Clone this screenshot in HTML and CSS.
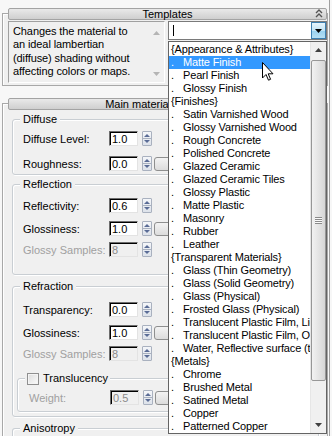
FILE: index.html
```html
<!DOCTYPE html>
<html>
<head>
<meta charset="utf-8">
<title>Material Templates</title>
<link rel="stylesheet" href="styles.css">
</head>
<body>
<div class="panel">
  <section class="rollout">
    <div class="rollout-title">
      <span>Templates</span>
      <svg class="chev" width="8" height="9" viewBox="0 0 8 9"><path d="M1 4 L4 1 L7 4 M1 8 L4 5 L7 8" fill="none" stroke="#555" stroke-width="1.4"/></svg>
    </div>
    <div class="rollout-body tpl-body">
      <div class="desc">
        <div class="desc-text">Changes the material to<br>an ideal lambertian<br>(diffuse) shading without<br>affecting colors or maps.</div>
        <div class="desc-scroll">
          <svg width="7" height="4" viewBox="0 0 7 4"><path d="M0 4 L3.5 0 L7 4 Z" fill="#b4b4b4"/></svg>
          <svg width="7" height="4" viewBox="0 0 7 4"><path d="M0 0 L3.5 4 L7 0 Z" fill="#b4b4b4"/></svg>
        </div>
      </div>
      <div class="combo">
        <div class="combo-field"><span class="caret"></span></div>
        <div class="combo-btn"><svg width="7" height="4" viewBox="0 0 7 4"><path d="M0 0 L3.5 4 L7 0 Z" fill="#000"/></svg></div>
      </div>
    </div>
  </section>

  <section class="rollout main">
    <div class="rollout-title"><span>Main material parameters</span></div>
    <div class="rollout-body main-body">
      <div class="group g-diffuse">
        <div class="group-label">Diffuse</div>
        <div class="row r1"><span class="lbl">Diffuse Level:</span><span class="num">1.0</span><span class="spin"></span></div>
        <div class="row r2"><span class="lbl">Roughness:</span><span class="num">0.0</span><span class="spin"></span><span class="mapbtn"></span></div>
      </div>
      <div class="group g-reflect">
        <div class="group-label">Reflection</div>
        <div class="row r1"><span class="lbl">Reflectivity:</span><span class="num">0.6</span><span class="spin"></span></div>
        <div class="row r2"><span class="lbl">Glossiness:</span><span class="num">1.0</span><span class="spin"></span><span class="mapbtn"></span></div>
        <div class="row r3 off"><span class="lbl">Glossy Samples:</span><span class="num">8</span><span class="spin"></span></div>
      </div>
      <div class="group g-refract">
        <div class="group-label">Refraction</div>
        <div class="row r1"><span class="lbl">Transparency:</span><span class="num">0.0</span><span class="spin"></span></div>
        <div class="row r2"><span class="lbl">Glossiness:</span><span class="num">1.0</span><span class="spin"></span><span class="mapbtn"></span></div>
        <div class="row r3 off"><span class="lbl">Glossy Samples:</span><span class="num">8</span><span class="spin"></span></div>
        <div class="subgroup">
          <div class="group-label sub-label"><span class="check"></span>Translucency</div>
          <div class="row r4 off"><span class="lbl sublbl">Weight:</span><span class="num">0.5</span><span class="spin"></span><span class="mapbtn"></span></div>
        </div>
      </div>
      <div class="group g-aniso">
        <div class="group-label">Anisotropy</div>
      </div>
    </div>
  </section>

  <div class="vline"></div>

  <div class="dropdown">
    <ul class="list">
      <li>{Appearance &amp; Attributes}</li>
      <li class="sel"><i>.</i>Matte Finish</li>
      <li><i>.</i>Pearl Finish</li>
      <li><i>.</i>Glossy Finish</li>
      <li>{Finishes}</li>
      <li><i>.</i>Satin Varnished Wood</li>
      <li><i>.</i>Glossy Varnished Wood</li>
      <li><i>.</i>Rough Concrete</li>
      <li><i>.</i>Polished Concrete</li>
      <li><i>.</i>Glazed Ceramic</li>
      <li><i>.</i>Glazed Ceramic Tiles</li>
      <li><i>.</i>Glossy Plastic</li>
      <li><i>.</i>Matte Plastic</li>
      <li><i>.</i>Masonry</li>
      <li><i>.</i>Rubber</li>
      <li><i>.</i>Leather</li>
      <li>{Transparent Materials}</li>
      <li><i>.</i>Glass (Thin Geometry)</li>
      <li><i>.</i>Glass (Solid Geometry)</li>
      <li><i>.</i>Glass (Physical)</li>
      <li><i>.</i>Frosted Glass (Physical)</li>
      <li><i>.</i>Translucent Plastic Film, Light Blur</li>
      <li><i>.</i>Translucent Plastic Film, Opalescent</li>
      <li><i>.</i>Water, Reflective surface (thin geometry)</li>
      <li>{Metals}</li>
      <li><i>.</i>Chrome</li>
      <li><i>.</i>Brushed Metal</li>
      <li><i>.</i>Satined Metal</li>
      <li><i>.</i>Copper</li>
      <li><i>.</i>Patterned Copper</li>
    </ul>
    <div class="vscroll">
      <div class="sb-arrow"><svg width="7" height="4" viewBox="0 0 7 4"><path d="M0 4 L3.5 0 L7 4 Z" fill="#404040"/></svg></div>
      <div class="sb-track"><div class="sb-thumb"><span class="grip"></span></div></div>
      <div class="sb-arrow"><svg width="7" height="4" viewBox="0 0 7 4"><path d="M0 0 L3.5 4 L7 0 Z" fill="#404040"/></svg></div>
    </div>
  </div>

  <svg class="cursor" width="12" height="19" viewBox="0 0 12 19"><path d="M0.5 0.5 L0.5 16 L4 12.5 L6.5 18.2 L8.6 17.3 L6.2 11.8 L11 11.8 Z" fill="#fff" stroke="#000" stroke-width="1" stroke-linejoin="miter"/></svg>
</div>
</body>
</html>
```
FILE: styles.css
```css
* { box-sizing: border-box; }
html, body { margin: 0; padding: 0; }
body {
  width: 332px;
  height: 436px;
  overflow: hidden;
  background: #f7f7f7;
  font-family: "Liberation Sans", Arial, sans-serif;
  font-size: 11px;
  color: #000;
}
.panel {
  position: relative;
  width: 332px;
  height: 436px;
  padding: 8px 0 0 2px;
}

/* rollouts */
.rollout { width: 326px; }
.rollout + .rollout { margin-top: 12px; }
.rollout-title {
  position: relative;
  z-index: 1;
  margin: 0 1px 0 6px;
  height: 12px;
  border: 1px solid #a3a3a3;
  border-radius: 2px;
  background: linear-gradient(#e9e9e9, #cfcfcf);
  text-align: center;
  line-height: 10px;
  font-size: 11px;
}
.chev { position: absolute; right: 3px; top: 0; }
.rollout-body {
  margin-top: -7px;
  border: 1px solid #a8a8a8;
  box-shadow: inset 1px 1px 0 #fff;
  background: #f0f0f0;
}
.tpl-body {
  display: flex;
  padding: 7px 0 2px 5px;
}

/* description box */
.desc {
  width: 157px;
  height: 62px;
  display: flex;
  border: 1px solid;
  border-color: #a0a0a0 #ffffff #ffffff #a0a0a0;
  background: #f0f0f0;
}
.desc-text {
  flex: 1;
  padding: 3px 0 0 4px;
  line-height: 13.3px;
  letter-spacing: -0.1px;
  white-space: nowrap;
}
.desc-scroll {
  width: 15px;
  display: flex;
  flex-direction: column;
  justify-content: space-between;
  align-items: center;
  padding: 9px 0 6px;
}
.desc-scroll svg { display: block; }

/* combo */
.combo {
  margin-left: 3px;
  width: 159px;
  height: 19px;
  display: flex;
  border: 1px solid #7a7a7a;
  background: #fff;
}
.combo-field { flex: 1; padding: 3px 0 0 4px; }
.caret { display: block; width: 1px; height: 11px; background: #000; }
.combo-btn {
  width: 15px;
  display: flex;
  align-items: center;
  justify-content: center;
  border: 1px solid #3c7fb1;
  background: linear-gradient(#e5f4fc, #c4e5f6 50%, #98d1ef 51%, #b6e0f4);
}

/* main rollout */
.main-body {
  height: 340px;
  padding: 15px 8px 0 9px;
}
.group {
  border: 1px solid #c9ced3;
  border-radius: 3px;
  box-shadow: inset 1px 1px 0 #fff, 1px 1px 0 #fff;
}
.group-label {
  width: fit-content;
  margin: -7px 0 0 7px;
  padding: 0 3px;
  line-height: 13px;
  background: #f0f0f0;
}
.g-diffuse { padding-bottom: 3px; }
.g-reflect { margin-top: 9px; padding-bottom: 17px; }
.g-refract { margin-top: 11px; padding-bottom: 4px; }
.g-aniso { margin-top: 11px; height: 20px; border-bottom: 0; }

.row {
  display: flex;
  align-items: center;
  height: 15px;
  padding-left: 10px;
}
.g-diffuse .r1 { margin-top: 5px; }
.g-diffuse .r2 { margin-top: 10px; }
.g-reflect .r1 { margin-top: 7px; }
.g-reflect .r2 { margin-top: 8px; }
.g-reflect .r3 { margin-top: 6px; }
.g-refract .r1 { margin-top: 9px; }
.g-refract .r2 { margin-top: 8px; }
.g-refract .r3 { margin-top: 6px; }

.lbl { width: 86px; white-space: nowrap; }
.num {
  width: 29px;
  height: 15px;
  border: 1px solid;
  border-color: #6d6d6d #e3e3e3 #e3e3e3 #6d6d6d;
  box-shadow: inset 1px 1px 0 #000;
  background: #fff;
  padding: 1px 0 0 2px;
  line-height: 12px;
}
.spin {
  margin-left: 4px;
  width: 10px;
  height: 15px;
  border: 1px solid #a9b1bf;
  border-radius: 1px;
  background:
    linear-gradient(#a9b1bf, #a9b1bf) center / 100% 1px no-repeat,
    linear-gradient(#f4f6f9, #dde2ea);
  position: relative;
}
.spin::before, .spin::after {
  content: "";
  position: absolute;
  left: 1px;
  border-left: 3px solid transparent;
  border-right: 3px solid transparent;
}
.spin::before { top: 2px; border-bottom: 3px solid #5a6c96; }
.spin::after { bottom: 2px; border-top: 3px solid #5a6c96; }
.mapbtn {
  margin-left: 2px;
  width: 20px;
  height: 14px;
  border: 1px solid #8e8f8f;
  border-radius: 3px;
  background: linear-gradient(#f3f3f3, #dcdcdc);
}
.off .lbl { color: #a0a0a0; }
.off .num { background: #f0f0f0; color: #8a8a8a; }

.subgroup {
  margin: 17px 4px 0 4px;
  border: 1px solid #c9ced3;
  border-radius: 3px;
  box-shadow: inset 1px 1px 0 #fff, 1px 1px 0 #fff;
  padding-bottom: 6px;
}
.sub-label {
  display: flex;
  align-items: center;
  margin-left: 7px;
  padding: 0 2px;
}
.check {
  width: 12px;
  height: 12px;
  margin-right: 4px;
  border: 1px solid #8f8f8f;
  background: linear-gradient(135deg, #dcdcdc, #fbfbfb);
  box-shadow: inset 0 0 0 1px #f4f4f4;
}
.subgroup .r4 { margin-top: 5px; padding-left: 11px; }
.sublbl { width: 81px; }

.vline {
  position: absolute;
  top: 0;
  left: 329px;
  width: 1px;
  height: 436px;
  background: #a0a0a0;
}

/* dropdown */
.dropdown {
  position: absolute;
  left: 168px;
  top: 41px;
  width: 159px;
  height: 393px;
  display: flex;
  border: 1px solid #646464;
  background: #fff;
  z-index: 5;
}
.list {
  list-style: none;
  margin: 0;
  padding: 1px 0 0;
  flex: 1;
  overflow: hidden;
  letter-spacing: -0.15px;
}
.list li {
  height: 13px;
  line-height: 13px;
  padding-left: 2px;
  white-space: nowrap;
  overflow: hidden;
}
.list li i {
  display: inline-block;
  width: 12px;
  font-style: normal;
}
.list li.sel { background: #3399ff; color: #fff; }
.vscroll {
  width: 16px;
  display: flex;
  flex-direction: column;
  background: #f0f0f0;
  border-left: 1px solid #e6e6e6;
}
.sb-arrow {
  height: 16px;
  display: flex;
  align-items: center;
  justify-content: center;
}
.sb-track {
  flex: 1;
  padding-top: 2px;
}
.sb-thumb {
  height: 321px;
  border: 1px solid #979797;
  border-radius: 2px;
  background: linear-gradient(90deg, #f2f2f2, #e3e3e3 55%, #d6d6d6);
  display: flex;
  align-items: center;
  justify-content: center;
}
.grip {
  width: 7px;
  height: 7px;
  background: repeating-linear-gradient(#8a8a8a 0 1px, #fafafa 1px 2px);
}

.cursor { position: absolute; left: 262px; top: 62px; z-index: 10; }
```
